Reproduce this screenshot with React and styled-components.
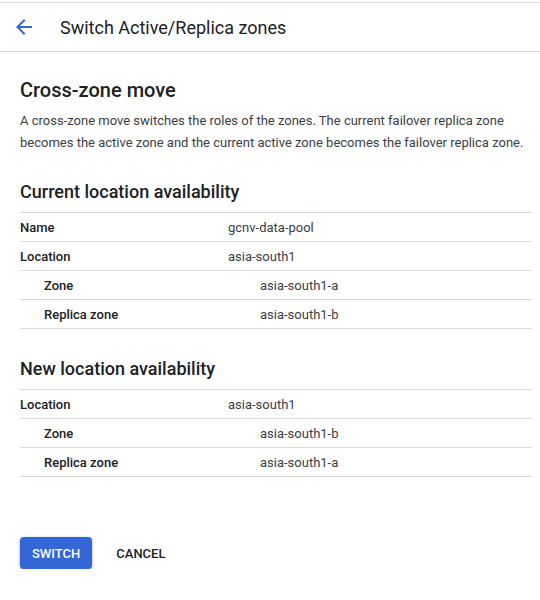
import React from "react";
import styled, { createGlobalStyle } from "styled-components";

const GlobalStyle = createGlobalStyle`
  html, body {
    margin: 0;
    padding: 0;
    background: #fff;
    font-family: Roboto, "Liberation Sans", Arial, sans-serif;
    color: #202124;
  }
`;

const Page = styled.div`
  width: 540px;
  padding-top: 2px;
`;

const Header = styled.div`
  display: flex;
  align-items: center;
  height: 48px;
  border-top: 1px solid #dadce0;
  border-bottom: 1px solid #dadce0;
`;

const BackButton = styled.button`
  display: flex;
  align-items: center;
  justify-content: center;
  width: 24px;
  height: 24px;
  margin-left: 12px;
  margin-right: 24px;
  padding: 0;
  border: none;
  background: none;
  cursor: pointer;
`;

const Title = styled.h1`
  margin: 0;
  font-size: 18px;
  font-weight: 400;
  color: #202124;
`;

const Content = styled.div`
  padding: 26px 8px 0 20px;
`;

const SectionTitle = styled.h2`
  margin: 0;
  font-size: ${(p) => (p.$large ? 20 : 18)}px;
  font-weight: 500;
  line-height: 24px;
  color: #202124;
`;

const Description = styled.p`
  margin: 8px 0 0;
  font-size: 13px;
  line-height: 22px;
  color: #3c4043;
`;

const Section = styled.section`
  margin-top: ${(p) => p.$top}px;
`;

const Table = styled.div`
  margin-top: 8px;
  border-top: 1px solid #dadce0;
`;

const Row = styled.div`
  display: grid;
  grid-template-columns: ${(p) => (p.$indent ? "24px 216px 1fr" : "0 208px 1fr")};
  align-items: center;
  height: 28px;
  border-bottom: 1px solid #dadce0;
  font-size: 13px;
`;

const Label = styled.div`
  grid-column: 2;
  font-weight: 500;
  color: #202124;
`;

const Value = styled.div`
  grid-column: 3;
  color: #3c4043;
`;

const Actions = styled.div`
  display: flex;
  align-items: center;
  gap: 8px;
  margin-top: 60px;
`;

const Button = styled.button`
  height: 32px;
  padding: 0 ${(p) => (p.$primary ? 12 : 16)}px;
  border: none;
  border-radius: 4px;
  font-family: inherit;
  font-size: 13px;
  font-weight: 500;
  text-transform: uppercase;
  cursor: pointer;
  background: ${(p) => (p.$primary ? "#3367d6" : "transparent")};
  color: ${(p) => (p.$primary ? "#fff" : "#202124")};
  box-shadow: ${(p) =>
    p.$primary ? "0 1px 2px rgba(60,64,67,0.3), 0 1px 3px 1px rgba(60,64,67,0.15)" : "none"};
`;

const current = [
  { label: "Name", value: "gcnv-data-pool" },
  { label: "Location", value: "asia-south1" },
  { label: "Zone", value: "asia-south1-a", indent: true },
  { label: "Replica zone", value: "asia-south1-b", indent: true },
];

const next = [
  { label: "Location", value: "asia-south1" },
  { label: "Zone", value: "asia-south1-b", indent: true },
  { label: "Replica zone", value: "asia-south1-a", indent: true },
];

const DetailTable = ({ rows }) => (
  <Table>
    {rows.map((r) => (
      <Row key={r.label} $indent={r.indent}>
        <Label>{r.label}</Label>
        <Value>{r.value}</Value>
      </Row>
    ))}
  </Table>
);

export default function App() {
  return (
    <Page>
      <GlobalStyle />
      <Header>
        <BackButton aria-label="Back">
          <svg width="24" height="24" viewBox="0 0 24 24">
            <path
              d="M20 11H7.83l5.59-5.59L12 4l-8 8 8 8 1.41-1.41L7.83 13H20v-2z"
              fill="#3367d6"
            />
          </svg>
        </BackButton>
        <Title>Switch Active/Replica zones</Title>
      </Header>
      <Content>
        <SectionTitle $large>Cross-zone move</SectionTitle>
        <Description>
          A cross-zone move switches the roles of the zones. The current failover replica zone
          becomes the active zone and the current active zone becomes the failover replica zone.
        </Description>
        <Section $top={26}>
          <SectionTitle>Current location availability</SectionTitle>
          <DetailTable rows={current} />
        </Section>
        <Section $top={28}>
          <SectionTitle>New location availability</SectionTitle>
          <DetailTable rows={next} />
        </Section>
        <Actions>
          <Button $primary>Switch</Button>
          <Button>Cancel</Button>
        </Actions>
      </Content>
    </Page>
  );
}
